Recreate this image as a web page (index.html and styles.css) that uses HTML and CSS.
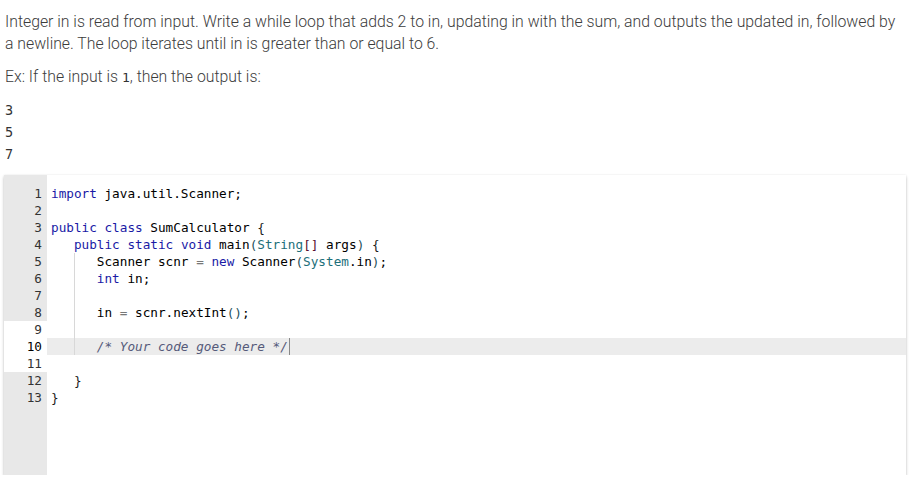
FILE: index.html
```html
<!DOCTYPE html>
<html>
<head>
<meta charset="utf-8">
<link rel="stylesheet" href="styles.css">
</head>
<body>
<div class="page">
  <p class="prompt">Integer in is read from input. Write a while loop that adds 2 to in, updating in with the sum, and outputs the updated in, followed by a newline. The loop iterates until in is greater than or equal to 6.</p>
  <p class="prompt ex">Ex: If the input is <code class="inl">1</code>, then the output is:</p>
  <pre class="output">3
5
7</pre>
  <div class="editor">
    <div class="gutter">
      <div class="gl">1</div>
      <div class="gl">2</div>
      <div class="gl">3</div>
      <div class="gl">4</div>
      <div class="gl">5</div>
      <div class="gl">6</div>
      <div class="gl">7</div>
      <div class="gl">8</div>
      <div class="gl white">9</div>
      <div class="gl white active">10</div>
      <div class="gl white">11</div>
      <div class="gl">12</div>
      <div class="gl">13</div>
      <div class="gfill"></div>
    </div>
    <div class="code">
      <div class="ln"><span class="kw">import</span> java.util.Scanner;</div>
      <div class="ln"> </div>
      <div class="ln"><span class="kw">public</span> <span class="kw">class</span> SumCalculator <span class="br">{</span></div>
      <div class="ln">   <span class="kw">public</span> <span class="kw">static</span> <span class="kw">void</span> main<span class="pr">(</span><span class="ty">String</span><span class="sq">[]</span> args<span class="pr">)</span> <span class="br">{</span></div>
      <div class="ln"><span class="ind">   </span>   Scanner scnr <span class="op">=</span> <span class="kw">new</span> Scanner<span class="pr">(</span><span class="ty">System</span>.in<span class="pr">)</span>;</div>
      <div class="ln"><span class="ind">   </span>   <span class="kw">int</span> in;</div>
      <div class="ln"><span class="ind">   </span></div>
      <div class="ln"><span class="ind">   </span>   in <span class="op">=</span> scnr.nextInt<span class="pr">()</span>;</div>
      <div class="ln"><span class="ind">   </span></div>
      <div class="ln hl"><span class="ind">   </span>   <span class="cm">/* Your code goes here */</span><span class="caret"></span></div>
      <div class="ln"> </div>
      <div class="ln">   <span class="br">}</span></div>
      <div class="ln"><span class="br">}</span></div>
    </div>
  </div>
</div>
</body>
</html>
```

FILE: styles.css
```css
html, body {
  margin: 0;
  padding: 0;
  background: #ffffff;
}
.page {
  padding: 0 5px 0 4px;
}
.prompt {
  font-family: Roboto, "Noto Sans", sans-serif;
  font-weight: 300;
  font-size: 15.8px;
  line-height: 22px;
  color: #3c3c3c;
  margin: 11px 0 0 1px;
}
.prompt.ex {
  margin-top: 11px;
}
.inl {
  font-family: "DejaVu Sans Mono", monospace;
  font-size: 13px;
  color: #333;
}
.output {
  font-family: "DejaVu Sans Mono", monospace;
  font-size: 13.5px;
  line-height: 22px;
  color: #333;
  margin: 10px 0 0 1px;
}
.editor {
  display: flex;
  margin-top: 10px;
  height: 300px;
  width: 902px;
  background: #fff;
  box-shadow: 0 2px 3px rgba(0,0,0,0.22), 0 0 2px rgba(0,0,0,0.08);
  font-family: "DejaVu Sans Mono", monospace;
  font-size: 12.7px;
  line-height: 17px;
  overflow: hidden;
}
.gutter {
  width: 43px;
  flex: none;
  display: flex;
  flex-direction: column;
  background: #e8e8e8;
  padding-top: 10px;
  box-sizing: border-box;
  color: #333;
}
.gl {
  height: 17px;
  text-align: right;
  padding-right: 5px;
  background: #e8e8e8;
}
.gl.white {
  background: #ffffff;
}
.gl.active {
  color: #000;
}
.gfill {
  flex: 1;
  background: #e8e8e8;
}
.code {
  flex: 1;
  padding-top: 10px;
  color: #000;
}
.ln {
  height: 17px;
  white-space: pre;
  padding-left: 4px;
}
.ln.hl {
  background: #ececec;
}
.ind {
  display: inline-block;
  height: 17px;
  vertical-align: top;
  box-shadow: 1px 0 0 #d8d8d8;
}
.kw { color: #1a1aa6; }
.ty { color: #1d6f7a; }
.pr { color: #1d4f5a; }
.sq { color: #5a1030; }
.br { color: #1a1a1a; }
.op { color: #777; }
.cm { color: #555a7a; font-style: italic; }
.caret {
  display: inline-block;
  width: 1px;
  height: 17px;
  vertical-align: top;
  background: #888;
  margin-left: 1px;
}
```
